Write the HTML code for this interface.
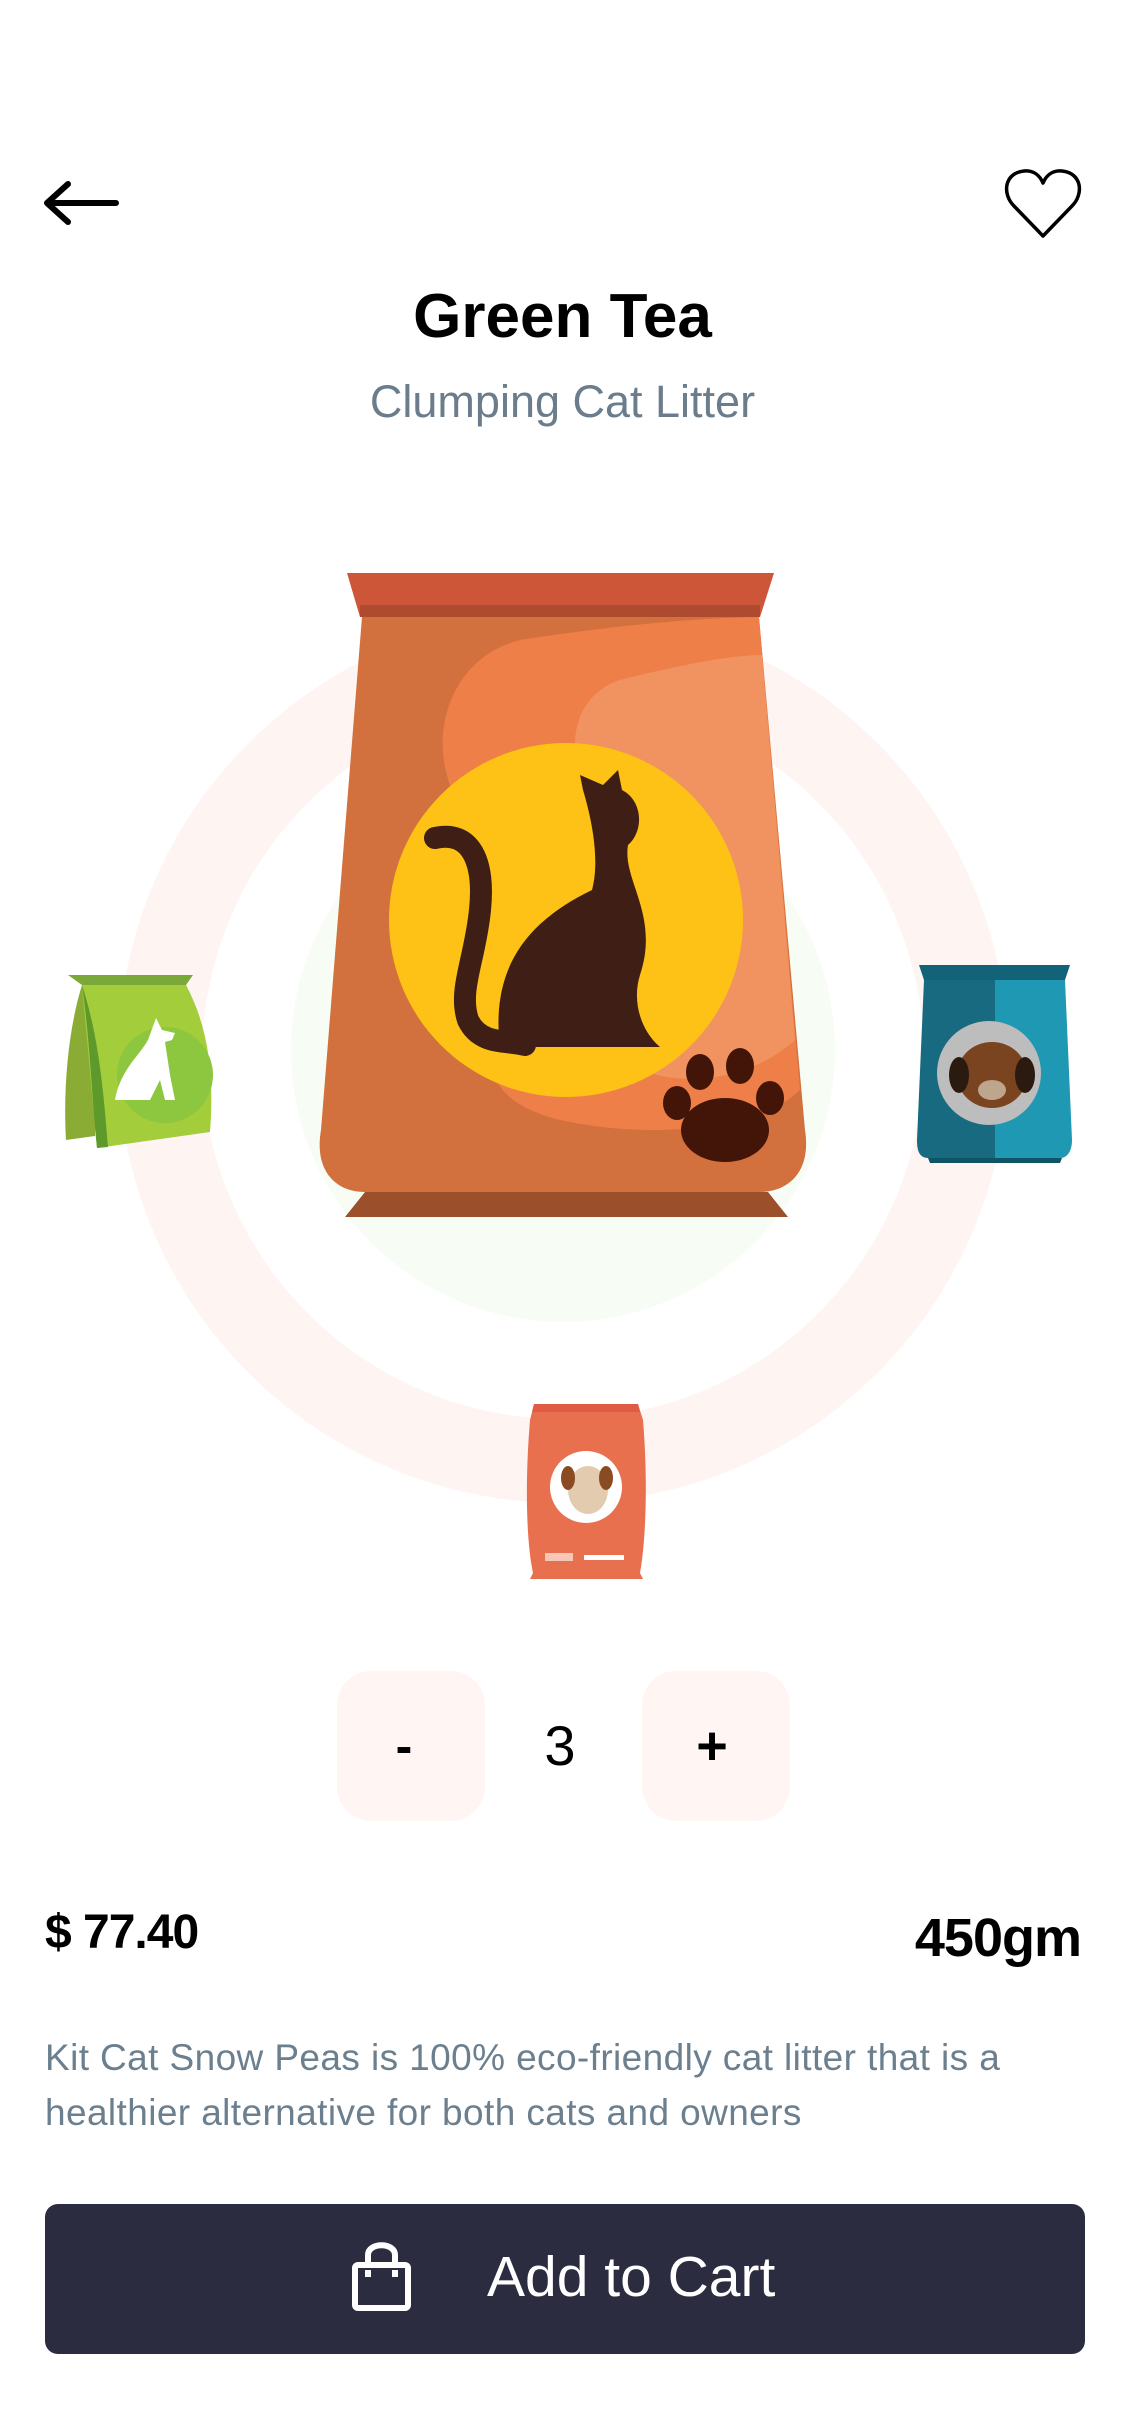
<!DOCTYPE html>
<html><head><meta charset="utf-8"><style>
*{margin:0;padding:0;box-sizing:border-box}
body{width:1125px;height:2436px;background:#fff;position:relative;overflow:hidden;font-family:"Liberation Sans",sans-serif}
.t{position:absolute;white-space:nowrap}
.qb{position:absolute;top:1671px;width:148px;height:150px;background:#fff5f3;border-radius:34px}
</style></head><body>
<svg width="1125" height="2436" style="position:absolute;left:0;top:0">
<!-- header icons -->
<path d="M47 203 H116 M68 184 L47 203 L68 222" fill="none" stroke="#000" stroke-width="6" stroke-linecap="round" stroke-linejoin="round"/>
<path d="M1043 236 L1014 206 C1002 194 1004 173 1024 171 C1034 170 1040 176 1043 183 C1046 176 1052 170 1062 171 C1082 173 1084 194 1072 206 Z" fill="none" stroke="#000" stroke-width="3.5" stroke-linejoin="round"/>
<!-- ring -->
<circle cx="563" cy="1058" r="403" fill="none" stroke="#fef4f2" stroke-width="84"/>
<circle cx="563" cy="1050" r="272" fill="#f7fdf4"/>
<!-- main bag -->
<path d="M347 573 H774 L760 617 H360 Z" fill="#cc5637"/>
<path d="M360 605 H760 L760 617 H360 Z" fill="#ae4a30"/>
<path d="M362 617 H759 L805 1130 C812 1175 785 1192 760 1192 H365 C335 1192 314 1170 321 1130 Z" fill="#d2703e"/>
<path d="M520 640 C650 620 720 618 759 617 L800 1090 C760 1130 650 1140 560 1120 C480 1100 470 1050 540 1000 C600 960 560 900 470 820 C420 760 440 660 520 640 Z" fill="#ee7f48"/>
<path d="M620 680 C700 660 740 655 762 655 L795 1040 C740 1090 650 1090 610 1050 C700 980 680 900 620 840 C560 780 560 700 620 680 Z" fill="#f19360"/>
<path d="M345 1217 H788 L768 1192 H365 Z" fill="#9b4f2a"/>
<circle cx="566" cy="920" r="177" fill="#fdc215"/>
<path d="M435 838 C470 830 485 860 480 910 C475 960 458 990 468 1020 C480 1045 505 1040 525 1045" fill="none" stroke="#3f1f15" stroke-width="22" stroke-linecap="round"/>
<path d="M500 1047 C490 965 530 920 592 890 C600 860 592 820 583 790 L580 775 L603 785 L618 770 L622 790 C642 800 645 830 628 845 C622 880 660 915 640 975 C632 1000 640 1030 660 1047 Z" fill="#3f1f15"/>
<ellipse cx="725" cy="1130" rx="44" ry="32" fill="#421508"/>
<ellipse cx="677" cy="1103" rx="14" ry="17" fill="#421508"/>
<ellipse cx="700" cy="1072" rx="14" ry="18" fill="#421508"/>
<ellipse cx="740" cy="1066" rx="14" ry="18" fill="#421508"/>
<ellipse cx="770" cy="1098" rx="14" ry="17" fill="#421508"/>
<!-- green bag -->
<path d="M68 975 H193 L186 985 H82 Z" fill="#7aa93a"/>
<path d="M82 985 C68 1030 63 1090 66 1140 L95 1136 L100 985 Z" fill="#8aac34"/>
<path d="M82 985 L97 1148 L210 1132 C214 1080 210 1030 186 985 Z" fill="#a3cd3b"/>
<path d="M82 985 C90 1040 92 1100 97 1148 L108 1147 C104 1100 100 1040 82 985 Z" fill="#5d9a2b"/>
<circle cx="165" cy="1075" r="48" fill="#8dc63f"/>
<path d="M115 1100 C120 1070 140 1055 148 1040 L156 1018 L162 1030 L175 1033 L172 1040 L165 1042 L170 1075 L175 1100 H165 L160 1080 L150 1100 H115 Z" fill="#fff"/>
<!-- blue bag -->
<path d="M919 965 H1070 L1065 980 H924 Z" fill="#126378"/>
<path d="M924 980 H995 V1158 H928 C918 1158 917 1148 917 1140 Z" fill="#176a80"/>
<path d="M995 980 H1065 L1072 1140 C1072 1150 1068 1158 1060 1158 H995 Z" fill="#1e98b3"/>
<path d="M928 1158 H1062 L1060 1163 H930 Z" fill="#0f5566"/>
<circle cx="989" cy="1073" r="52" fill="#bdbdbd"/>
<ellipse cx="992" cy="1075" rx="35" ry="33" fill="#7b4420"/>
<ellipse cx="959" cy="1075" rx="10" ry="18" fill="#2a1a10"/>
<ellipse cx="1025" cy="1075" rx="10" ry="18" fill="#2a1a10"/>
<ellipse cx="992" cy="1090" rx="14" ry="10" fill="#bda58e"/>
<!-- red bag -->
<path d="M534 1404 H638 L643 1420 C648 1480 646 1540 640 1573 L643 1579 H530 L533 1573 C526 1540 525 1480 530 1420 Z" fill="#e8704f"/>
<path d="M534 1404 H638 L640 1412 H532 Z" fill="#e05b43"/>
<circle cx="586" cy="1487" r="36" fill="#fff"/>
<ellipse cx="588" cy="1490" rx="20" ry="24" fill="#e3cbb0"/>
<ellipse cx="568" cy="1478" rx="7" ry="12" fill="#8a4a22"/>
<ellipse cx="606" cy="1478" rx="7" ry="12" fill="#8a4a22"/>
<rect x="545" y="1553" width="28" height="8" fill="#f7c7b5"/>
<rect x="584" y="1555" width="40" height="5" fill="#fff"/>
</svg>
<div class="t" style="left:0;width:1125px;text-align:center;top:282px;font-size:62px;font-weight:bold;color:#000;line-height:70px">Green Tea</div>
<div class="t" style="left:0;width:1125px;text-align:center;top:376px;font-size:45px;color:#6b7d8c;line-height:52px">Clumping Cat Litter</div>
<div class="qb" style="left:337px"></div>
<div class="qb" style="left:642px"></div>
<div class="t" style="left:330px;width:148px;text-align:center;top:1718px;font-size:50px;font-weight:bold;line-height:56px">-</div>
<div class="t" style="left:510px;width:100px;text-align:center;top:1718px;font-size:56px;line-height:56px">3</div>
<div class="t" style="left:638px;width:148px;text-align:center;top:1718px;font-size:54px;font-weight:bold;line-height:56px">+</div>
<div class="t" style="left:45px;top:1906px;font-size:48px;font-weight:bold;line-height:54px;letter-spacing:-1px">$ 77.40</div>
<div class="t" style="right:44px;top:1908px;font-size:54px;font-weight:bold;line-height:60px;letter-spacing:-1px">450gm</div>
<div class="t" style="left:45px;top:2030px;font-size:37px;color:#6b7f8e;line-height:55px;letter-spacing:0.4px">Kit Cat Snow Peas is 100% eco-friendly cat litter that is a<br>healthier alternative for both cats and owners</div>
<div style="position:absolute;left:45px;top:2204px;width:1040px;height:150px;background:#2c2c40;border-radius:13px"></div>
<svg width="1125" height="2436" style="position:absolute;left:0;top:0">
<rect x="355" y="2265" width="53" height="43" rx="3" fill="none" stroke="#fff" stroke-width="6"/>
<path d="M368 2265 V2255 C368 2242 395 2242 395 2255 V2265 M368 2270 V2277 M395 2270 V2277" fill="none" stroke="#fff" stroke-width="6"/>
</svg>
<div class="t" style="left:487px;top:2244px;font-size:57px;color:#fff;line-height:66px">Add to Cart</div>
</body></html>
